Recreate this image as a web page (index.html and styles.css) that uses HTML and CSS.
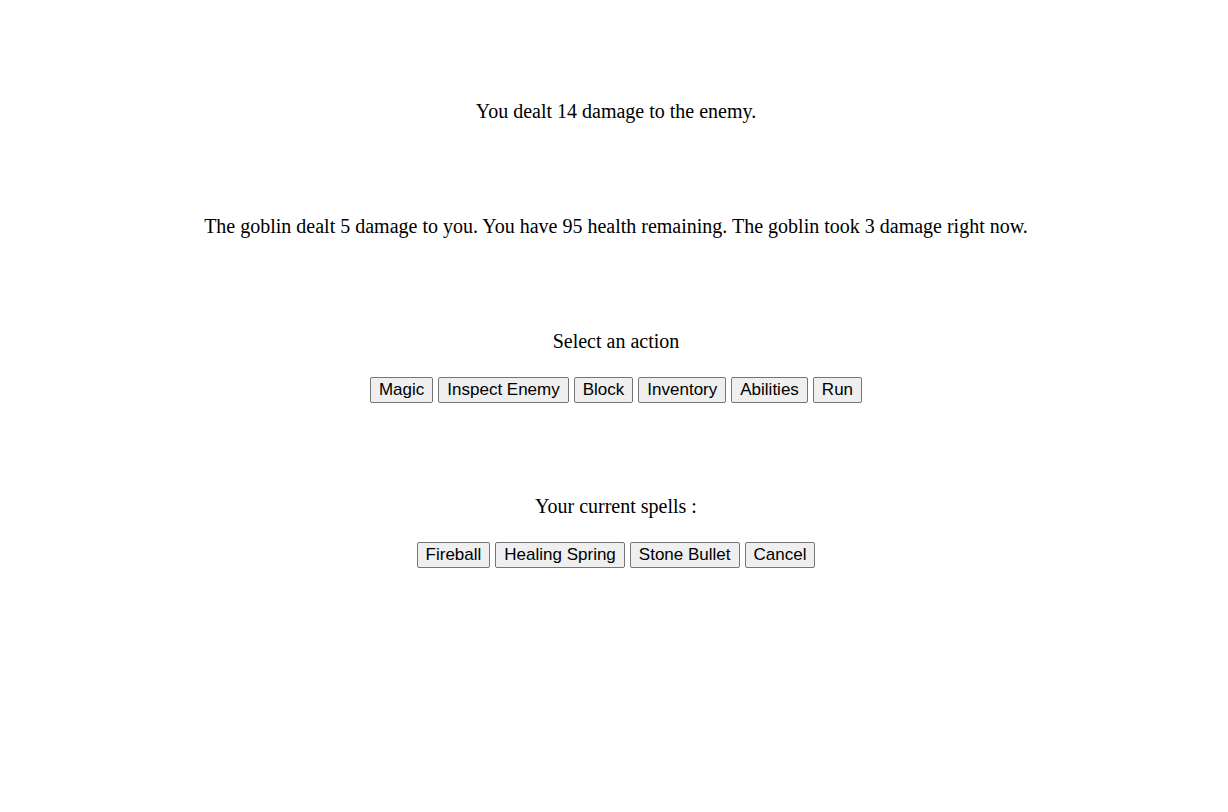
FILE: index.html
```html
<!DOCTYPE html>
<html>
<head>
<meta charset="utf-8">
<link rel="stylesheet" href="styles.css">
</head>
<body>
<main class="game">
  <p class="msg">You dealt 14 damage to the enemy.</p>
  <p class="msg">The goblin dealt 5 damage to you. You have 95 health remaining. The goblin took 3 damage right now.</p>
  <section class="panel">
    <p class="label">Select an action</p>
    <div class="buttons">
      <button class="btn">Magic</button>
      <button class="btn">Inspect Enemy</button>
      <button class="btn">Block</button>
      <button class="btn">Inventory</button>
      <button class="btn">Abilities</button>
      <button class="btn">Run</button>
    </div>
  </section>
  <section class="panel">
    <p class="label">Your current spells :</p>
    <div class="buttons">
      <button class="btn">Fireball</button>
      <button class="btn">Healing Spring</button>
      <button class="btn">Stone Bullet</button>
      <button class="btn">Cancel</button>
    </div>
  </section>
</main>
</body>
</html>
```

FILE: styles.css
```css
html, body {
  margin: 0;
  padding: 0;
  background: #ffffff;
}
body {
  font-family: "Liberation Serif", "Times New Roman", serif;
  font-size: 20px;
  color: #000;
}
.game {
  display: flex;
  flex-direction: column;
  align-items: center;
  padding: 100px 0 0 4px;
  gap: 92px;
}
.msg, .label {
  margin: 0;
  line-height: 23px;
  text-align: center;
}
.panel {
  display: flex;
  flex-direction: column;
  align-items: center;
  gap: 24px;
}
.buttons {
  display: flex;
  gap: 5px;
  justify-content: center;
}
.btn {
  font-family: "Liberation Sans", Arial, sans-serif;
  font-size: 17px;
  color: #000;
  background: #efefef;
  border: 1px solid #767676;
  border-radius: 2px;
  padding: 2px 8px;
  height: 26px;
  line-height: 20px;
  margin: 0;
}
```
